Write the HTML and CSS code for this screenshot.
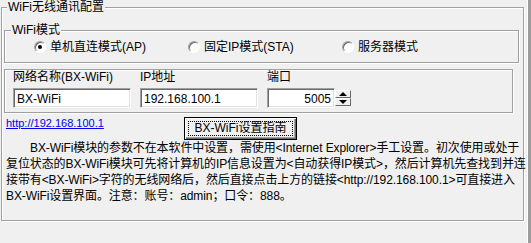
FILE: index.html
```html
<!DOCTYPE html>
<html lang="zh-CN">
<head>
  <meta charset="UTF-8" />
  <title>WiFi无线通讯配置</title>
  <link rel="stylesheet" href="styles.css">
</head>
<body>
  <div class="panel">
    <fieldset class="group outer">
      <legend>WiFi无线通讯配置</legend>

      <fieldset class="group mode">
        <legend>WiFi模式</legend>
        <div class="radios">
          <label class="opt"><span class="radio checked"></span>单机直连模式(AP)</label>
          <label class="opt"><span class="radio"></span>固定IP模式(STA)</label>
          <label class="opt"><span class="radio"></span>服务器模式</label>
        </div>
      </fieldset>

      <fieldset class="group net">
        <div class="field">
          <div class="cap">网络名称(BX-WiFi)</div>
          <div class="edit wide">BX-WiFi</div>
        </div>
        <div class="field">
          <div class="cap">IP地址</div>
          <div class="edit wide">192.168.100.1</div>
        </div>
        <div class="field">
          <div class="cap">端口</div>
          <div class="spin">
            <div class="edit port">5005</div>
            <div class="arrows">
              <span class="arrow up"></span>
              <span class="arrow down"></span>
            </div>
          </div>
        </div>
      </fieldset>

      <div class="actions">
        <a class="link" href="#">http://192.168.100.1</a>
        <button class="btn"><span class="focus">BX-WiFi设置指南</span></button>
      </div>

      <p class="note">BX-WiFi模块的参数不在本软件中设置，需使用&lt;Internet Explorer&gt;手工设置。初次使用或处于<br>复位状态的BX-WiFi模块可先将计算机的IP信息设置为&lt;自动获得IP模式&gt;，然后计算机先查找到并连<br>接带有&lt;BX-WiFi&gt;字符的无线网络后，然后直接点击上方的链接&lt;http://192.168.100.1&gt;可直接进入<br>BX-WiFi设置界面。注意：账号：admin；口令：888。</p>
    </fieldset>
  </div>
</body>
</html>
```

FILE: styles.css
```css
* { margin: 0; padding: 0; box-sizing: border-box; }
body {
  background: #f0f0f0;
  font-family: "Liberation Sans", "Noto Sans CJK SC", sans-serif;
  font-size: 12px;
  color: #000;
}
.panel {
  width: 531px;
  height: 243px;
  padding: 0 4px 0 1px;
  border-right: 3px solid #9c9c9c;
  box-shadow: inset -1px 0 0 #fff;
}

/* etched group boxes */
.group {
  border: 1px solid #a0a0a0;
  box-shadow: 1px 1px 0 #fff, inset 1px 1px 0 #fff;
  min-width: 0;
}
.group legend {
  padding: 0 1px;
  margin-left: 3px;
  line-height: 14px;
  background: #f0f0f0;
}
.outer {
  height: 221px;
  padding: 9px 4px 0 2px;
}
.mode {
  height: 40px;
  padding: 3px 0 0 0;
}
.mode legend { margin-left: 6px; }
.radios {
  display: flex;
  padding-left: 29px;
  line-height: 14px;
}
.opt {
  display: flex;
  align-items: center;
  gap: 4px;
  width: 154px;
}
.radio {
  width: 12px;
  height: 12px;
  border-radius: 50%;
  background: #fff;
  border: 1px solid;
  border-color: #a0a0a0 #fff #fff #a0a0a0;
  box-shadow: inset 1px 1px 0 #696969;
  display: flex;
  align-items: center;
  justify-content: center;
}
.radio.checked::after {
  content: "";
  width: 4px;
  height: 4px;
  border-radius: 50%;
  background: #000;
}

.net {
  margin-top: 6px;
  width: 509px;
  height: 44px;
  display: flex;
  gap: 9px;
  padding: 0 0 0 8px;
}
.cap { line-height: 14px; height: 18px; }
.edit {
  height: 20px;
  background: #fff;
  border: 1px solid;
  border-color: #a0a0a0 #fff #fff #a0a0a0;
  box-shadow: inset 1px 1px 0 #696969, inset -1px -1px 0 #e3e3e3;
  padding: 3px 0 0 3px;
  line-height: 14px;
  white-space: nowrap;
}
.wide { width: 118px; }
.spin { display: flex; }
.port {
  width: 68px;
  text-align: right;
  padding-right: 3px;
}
.arrows {
  display: flex;
  flex-direction: column;
  padding: 2px 0;
}
.arrow {
  width: 16px;
  height: 8px;
  background: #f0f0f0;
  border: 1px solid;
  border-color: #fff #696969 #696969 #fff;
  display: flex;
  align-items: center;
  justify-content: center;
}
.arrow::after {
  content: "";
  border-left: 4px solid transparent;
  border-right: 4px solid transparent;
}
.up::after { border-bottom: 4px solid #000; }
.down::after { border-top: 4px solid #000; }

.actions {
  display: flex;
  align-items: flex-start;
  padding-top: 4px;
  height: 27px;
}
.link {
  color: #0000ee;
  font-size: 11px;
  line-height: 14px;
  width: 180px;
  padding-left: 2px;
  margin-top: -1px;
}
.btn {
  width: 113px;
  height: 23px;
  font: inherit;
  background: #f0f0f0;
  border: 1px solid #000;
  box-shadow: inset 1px 1px 0 #fff, inset -1px -1px 0 #696969, inset -2px -2px 0 #a0a0a0;
  padding: 3px;
  display: flex;
}
.focus {
  flex: 1;
  border: 1px dotted #000;
  line-height: 13px;
}

.note {
  line-height: 16px;
  text-indent: 24px;
  white-space: nowrap;
  padding-left: 2px;
  letter-spacing: -0.1px;
}
```
